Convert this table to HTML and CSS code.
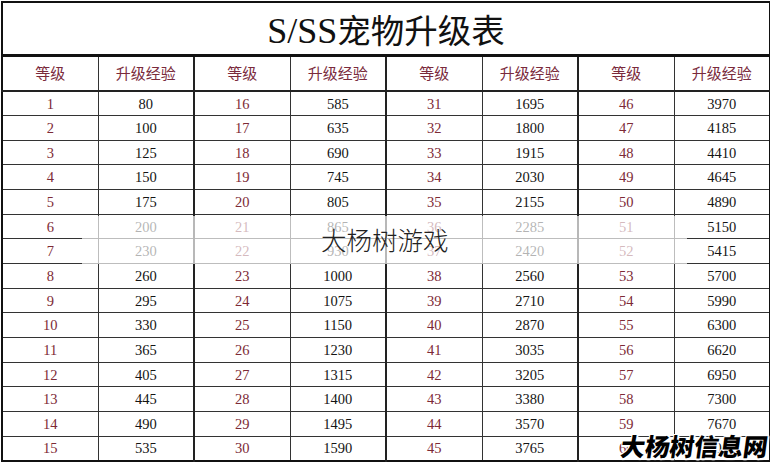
FILE: index.html
```html
<!DOCTYPE html>
<html lang="zh">
<head>
<meta charset="utf-8">
<title>S/SS宠物升级表</title>
<link rel="stylesheet" href="styles.css">
</head>
<body>
<div class="sheet">
  <table class="grid">
    <colgroup>
      <col class="c"><col class="c g"><col class="c"><col class="c g"><col class="c"><col class="c g"><col class="c"><col class="c">
    </colgroup>
    <tr class="title"><td colspan="8"><span class="lat">S/SS</span><span class="han">宠物升级表</span></td></tr>
    <tr class="head">
      <td>等级</td><td class="sep">升级经验</td><td>等级</td><td class="sep">升级经验</td><td>等级</td><td class="sep">升级经验</td><td>等级</td><td>升级经验</td>
    </tr>
    <tr><td class="lv">1</td><td class="sep">80</td><td class="lv">16</td><td class="sep">585</td><td class="lv">31</td><td class="sep">1695</td><td class="lv">46</td><td>3970</td></tr>
    <tr><td class="lv">2</td><td class="sep">100</td><td class="lv">17</td><td class="sep">635</td><td class="lv">32</td><td class="sep">1800</td><td class="lv">47</td><td>4185</td></tr>
    <tr><td class="lv">3</td><td class="sep">125</td><td class="lv">18</td><td class="sep">690</td><td class="lv">33</td><td class="sep">1915</td><td class="lv">48</td><td>4410</td></tr>
    <tr><td class="lv">4</td><td class="sep">150</td><td class="lv">19</td><td class="sep">745</td><td class="lv">34</td><td class="sep">2030</td><td class="lv">49</td><td>4645</td></tr>
    <tr><td class="lv">5</td><td class="sep">175</td><td class="lv">20</td><td class="sep">805</td><td class="lv">35</td><td class="sep">2155</td><td class="lv">50</td><td>4890</td></tr>
    <tr><td class="lv">6</td><td class="sep">200</td><td class="lv">21</td><td class="sep">865</td><td class="lv">36</td><td class="sep">2285</td><td class="lv">51</td><td>5150</td></tr>
    <tr><td class="lv">7</td><td class="sep">230</td><td class="lv">22</td><td class="sep">930</td><td class="lv">37</td><td class="sep">2420</td><td class="lv">52</td><td>5415</td></tr>
    <tr><td class="lv">8</td><td class="sep">260</td><td class="lv">23</td><td class="sep">1000</td><td class="lv">38</td><td class="sep">2560</td><td class="lv">53</td><td>5700</td></tr>
    <tr><td class="lv">9</td><td class="sep">295</td><td class="lv">24</td><td class="sep">1075</td><td class="lv">39</td><td class="sep">2710</td><td class="lv">54</td><td>5990</td></tr>
    <tr><td class="lv">10</td><td class="sep">330</td><td class="lv">25</td><td class="sep">1150</td><td class="lv">40</td><td class="sep">2870</td><td class="lv">55</td><td>6300</td></tr>
    <tr><td class="lv">11</td><td class="sep">365</td><td class="lv">26</td><td class="sep">1230</td><td class="lv">41</td><td class="sep">3035</td><td class="lv">56</td><td>6620</td></tr>
    <tr><td class="lv">12</td><td class="sep">405</td><td class="lv">27</td><td class="sep">1315</td><td class="lv">42</td><td class="sep">3205</td><td class="lv">57</td><td>6950</td></tr>
    <tr><td class="lv">13</td><td class="sep">445</td><td class="lv">28</td><td class="sep">1400</td><td class="lv">43</td><td class="sep">3380</td><td class="lv">58</td><td>7300</td></tr>
    <tr><td class="lv">14</td><td class="sep">490</td><td class="lv">29</td><td class="sep">1495</td><td class="lv">44</td><td class="sep">3570</td><td class="lv">59</td><td>7670</td></tr>
    <tr><td class="lv">15</td><td class="sep">535</td><td class="lv">30</td><td class="sep">1590</td><td class="lv">45</td><td class="sep">3765</td><td class="lv">60</td><td>8060</td></tr>
  </table>
  <div class="fade"></div>
  <div class="wm">大杨树游戏</div>
  <div class="wm2">大杨树信息网</div>
</div>
</body>
</html>
```

FILE: styles.css
```css
* { box-sizing: border-box; }
html, body {
  margin: 0;
  padding: 0;
  background: #fff;
}
body {
  width: 770px;
  height: 463px;
  overflow: hidden;
}
.sheet {
  position: relative;
  width: 770px;
  height: 463px;
  padding: 1px 0 0 1px;
}
.grid {
  border-collapse: collapse;
  table-layout: fixed;
  width: 768px;
  border: 2px solid #111;
  font-family: "Liberation Serif", "Noto Sans CJK SC", serif;
}
.grid col.c { width: 96px; }
.grid td {
  padding: 0;
  text-align: center;
  vertical-align: middle;
  border: 1px solid #333;
  color: #141414;
  font-size: 14.5px;
  height: 24.67px;
  line-height: 16px;
}
.grid td.sep { border-right: 2px solid #222; }
.grid td.lv { color: #7d2a36; }
.grid tr.title td {
  height: 53px;
  border-bottom: 3px solid #111;
  font-size: 33px;
  line-height: 38px;
  color: #111;
  padding-top: 4px;
}
.lat {
  font-family: "Liberation Serif", "Times New Roman", serif;
  font-size: 36px;
  font-weight: 400;
}
.han {
  font-family: "Noto Sans CJK SC", sans-serif;
  font-weight: 400;
  font-size: 33.5px;
}
.grid tr.head td {
  height: 36px;
  font-family: "Noto Sans CJK SC", sans-serif;
  font-size: 15px;
  color: #7a2a3c;
  border-bottom: 2px solid #222;
}
.fade {
  position: absolute;
  left: 82px;
  top: 216px;
  width: 605px;
  height: 48px;
  background: rgba(255, 255, 255, 0.68);
}
.wm {
  position: absolute;
  left: 321px;
  top: 224px;
  font-family: "Noto Sans CJK SC", sans-serif;
  font-weight: 300;
  font-size: 25.5px;
  line-height: 30px;
  color: #222;
}
.wm2 {
  position: absolute;
  left: 621px;
  top: 431px;
  font-family: "Noto Sans CJK SC", sans-serif;
  font-weight: 900;
  font-size: 24.5px;
  line-height: 30px;
  color: #000;
  transform: skewX(-8deg);
  text-shadow: 1px 1px 0 #fff, -1px -1px 0 #fff, 1px -1px 0 #fff, -1px 1px 0 #fff, 0 2px 1px #fff, 2px 0 1px #fff;
}
```
